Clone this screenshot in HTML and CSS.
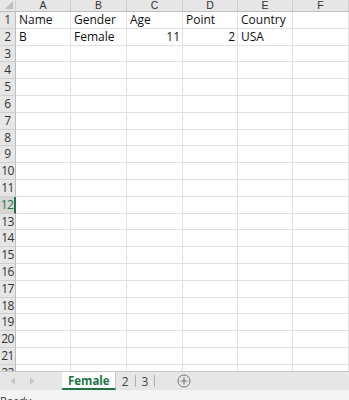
FILE: index.html
```html
<!DOCTYPE html>
<html lang="en">
<head>
    <meta charset="UTF-8">
    <meta name="viewport" content="width=device-width, initial-scale=1.0">
    <title>Female</title>
    <link rel="stylesheet" href="styles.css">
</head>
<body>
    <div class="sheet" id="sheet">
        <div class="corner"><span class="corner-mark"></span></div>
        <div class="col-head">A</div>
        <div class="col-head">B</div>
        <div class="col-head">C</div>
        <div class="col-head">D</div>
        <div class="col-head">E</div>
        <div class="col-head">F</div>

        <div class="row-head">1</div>
        <div class="cell">Name</div>
        <div class="cell">Gender</div>
        <div class="cell">Age</div>
        <div class="cell">Point</div>
        <div class="cell">Country</div>
        <div class="cell"></div>

        <div class="row-head">2</div>
        <div class="cell">B</div>
        <div class="cell">Female</div>
        <div class="cell num">11</div>
        <div class="cell num">2</div>
        <div class="cell">USA</div>
        <div class="cell"></div>
        <!-- empty rows are added below -->
    </div>

    <div class="tab-bar">
        <div class="tab-nav">
            <svg width="6" height="8" viewBox="0 0 6 8"><path d="M5 0.5v7L0.5 4z" fill="#c4c4c4"/></svg>
            <svg width="6" height="8" viewBox="0 0 6 8"><path d="M1 0.5v7L5.5 4z" fill="#c4c4c4"/></svg>
        </div>
        <div class="tab active">Female</div>
        <div class="tab">2</div>
        <div class="tab">3</div>
        <div class="tab-add">
            <svg width="14" height="14" viewBox="0 0 14 14">
                <circle cx="7" cy="7" r="6" fill="none" stroke="#777" stroke-width="1"/>
                <path d="M7 3.5v7M3.5 7h7" stroke="#777" stroke-width="1.2"/>
            </svg>
        </div>
    </div>
    <div class="status-bar">Ready</div>

    <script>
const sheet = document.getElementById('sheet');
for (let r = 3; r <= 22; r++) {
  const head = document.createElement('div');
  head.className = 'row-head' + (r === 12 ? ' selected' : '');
  head.textContent = r;
  sheet.appendChild(head);
  for (let c = 0; c < 6; c++) {
    const cell = document.createElement('div');
    cell.className = 'cell';
    sheet.appendChild(cell);
  }
}
    </script>
</body>
</html>
```

FILE: styles.css
```css
/* Excel-like sheet view */
body {
    margin: 0;
    width: 349px;
    height: 400px;
    overflow: hidden;
    font-family: "Open Sans", "Liberation Sans", sans-serif;
    background: #fff;
}
.sheet {
    display: grid;
    grid-template-columns: 16px 55px 56px 56px 55px 55px 56px;
    grid-template-rows: 12px;
    grid-auto-rows: 16.8px;
    height: 371px;
    overflow: hidden;
    color: #111;
}
.corner {
    position: relative;
    background: #e6e6e6;
    border-right: 1px solid #cfcfcf;
    border-bottom: 1px solid #bdbdbd;
}
.corner-mark {
    position: absolute;
    right: 2px;
    bottom: 2px;
    width: 0;
    height: 0;
    border-left: 8px solid transparent;
    border-bottom: 8px solid #bdbdbd;
}
.col-head {
    background: #e6e6e6;
    border-right: 1px solid #cfcfcf;
    border-bottom: 1px solid #bdbdbd;
    text-align: center;
    font-family: "Liberation Sans", sans-serif;
    font-size: 10.5px;
    line-height: 11px;
    color: #333;
}
.row-head {
    background: #e6e6e6;
    border-right: 1px solid #bdbdbd;
    border-bottom: 1px solid #d0d0d0;
    text-align: center;
    font-size: 12px;
    line-height: 16px;
    color: #333;
    overflow: hidden;
    white-space: nowrap;
    letter-spacing: -0.5px;
}
.row-head.selected {
    background: #d6d6d6;
    border-right: 2px solid #217346;
    color: #217346;
}
.cell {
    border-right: 1px solid #e1e1e1;
    border-bottom: 1px solid #e1e1e1;
    padding: 0 3px;
    line-height: 16px;
    font-size: 12px;
    color: #111;
    white-space: nowrap;
    overflow: hidden;
}
.cell.num {
    text-align: right;
    padding-right: 2px;
}
.tab-bar {
    display: flex;
    align-items: stretch;
    height: 18px;
    background: #e6e6e6;
    border-top: 1px solid #c6c6c6;
    font-size: 12px;
}
.tab-nav {
    display: flex;
    align-items: center;
    gap: 13px;
    width: 62px;
    padding-left: 10px;
    box-sizing: border-box;
}
.tab {
    display: flex;
    align-items: center;
    padding: 0 6px;
    color: #444;
    border-right: 1px solid #b0b0b0;
    margin: 3px 0;
}
.tab.active {
    margin: 0;
    padding: 0 5px 0 6px;
    background: #fff;
    color: #217346;
    font-size: 11.5px;
    font-weight: bold;
    border-right: 1px solid #c6c6c6;
    border-bottom: 2px solid #217346;
}
.tab-add {
    display: flex;
    align-items: center;
    margin-left: 22px;
}
.status-bar {
    height: 10px;
    background: #f3f3f3;
    font-size: 11px;
    line-height: 22px;
    color: #333;
    overflow: hidden;
}
```
